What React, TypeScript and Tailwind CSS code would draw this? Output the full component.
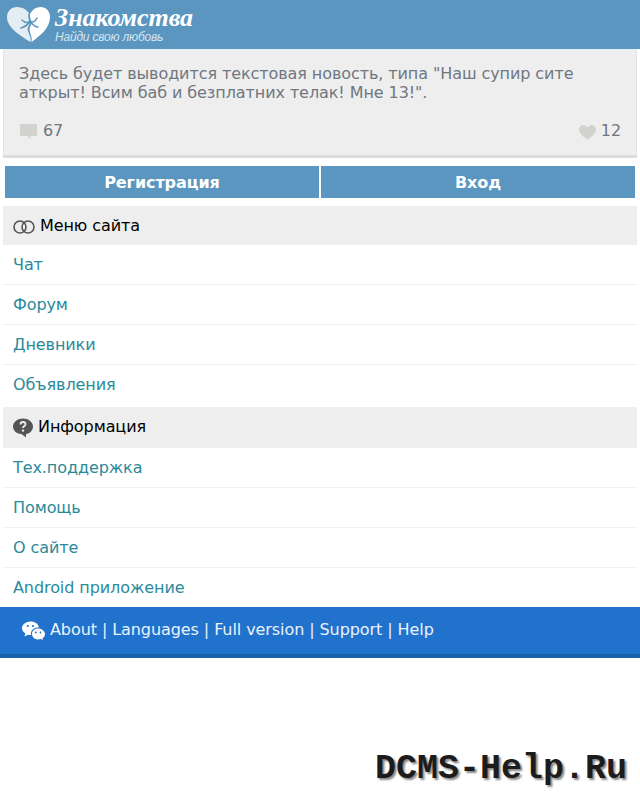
export default function App() {
  const Row = ({ t, last }: { t: string; last?: boolean }) => (
    <a className={`flex items-center px-[10px] text-[#2a8a9a] ${last ? "h-[39px]" : "h-10 border-b border-[#f2f2f2]"}`}>{t}</a>
  );
  return (
    <div className="relative h-[800px] w-[640px] overflow-hidden bg-white font-['DejaVu_Sans',sans-serif] text-base tracking-[-0.08px]">
      <header className="flex h-[49px] items-center bg-[#5b96c0] pl-[7px]">
        <svg width="43" height="35" viewBox="0 0 43 35" className="mt-[-1px]">
          <path d="M23.500 35C14 29 0 21 0 10C0 4 4.500 0 10 0C15 0 19 2 22 6C19 10 25 15 21 20C19 24 25 29 23.500 35Z" fill="#e4edf4" />
          <path d="M24.500 35C26 29 21 24 23 20C27 15 21 10 23.500 6C26 2 29 0 33.500 0C39 0 43 4 43 10C43 21 33 29 24.500 35Z" fill="#ffffff" />
          <path d="M23 14C21 16 18 16 15 13M23 14C25 16 28 15 30 11M22.500 15C20 19 17 20 14 21M23.500 15C26 18 28 20 31 20" fill="none" stroke="#5b96c0" strokeWidth="1.500" strokeLinecap="round" />
          <circle cx="23" cy="15" r="1.800" fill="#5b96c0" />
        </svg>
        <div className="ml-[5px] flex flex-col">
          <span className="font-['Liberation_Serif',serif] text-[26px] leading-[26px] font-bold tracking-[-0.1px] text-white italic">Знакомства</span>
          <span className="font-['Liberation_Sans',sans-serif] text-xs leading-[13px] tracking-[-0.2px] text-[#d5e4ef] italic">Найди свою любовь</span>
        </div>
      </header>

      <section className="mx-[3px] h-[109px] border-x border-t-2 border-b-[3px] border-x-[#e2e2e2] border-t-[#e9f0f3] border-b-[#dddddd] bg-[#eeeeee] px-[15px] pt-[13px] text-[#6f7780]">
        <p className="leading-[19px]">Здесь будет выводится текстовая новость, типа "Наш супир сите аткрыт! Всим баб и безплатних телак! Мне 13!".</p>
        <div className="mt-[17px] flex items-center justify-between">
          <span className="flex items-center gap-[6px]">
            <svg width="17" height="16" viewBox="0 0 17 16" className="mt-[2px] ml-[1px]"><path d="M0 0H17V12H11L9 15.500L8 12H0Z" fill="#d2d2ce" /></svg>
            67
          </span>
          <span className="flex items-center gap-[5px]">
            <svg width="17" height="15" viewBox="0 0 17 15" className="mt-[2px]"><path d="M8.500 15C5 12 0 9 0 4.500C0 2 2 0 4.300 0C6 0 7.600 1 8.500 2.500C9.400 1 11 0 12.700 0C15 0 17 2 17 4.500C17 9 12 12 8.500 15Z" fill="#d2d2ce" /></svg>
            12
          </span>
        </div>
      </section>

      <div className="mx-[5px] mt-2 grid grid-cols-2 gap-[2px]">
        <a className="flex h-8 items-center justify-center bg-[#5b96c0] pt-[1px] font-bold text-white">Регистрация</a>
        <a className="flex h-8 items-center justify-center bg-[#5b96c0] pt-[1px] font-bold text-white">Вход</a>
      </div>

      <div className="mx-[3px] mt-2 flex h-[39px] items-center gap-[5px] bg-[#eeeeee] pl-[10px] text-black">
        <svg width="22" height="14" viewBox="0 0 22 14" className="mt-[3px]" fill="none" stroke="#555" strokeWidth="1.600">
          <circle cx="7" cy="7" r="6" />
          <circle cx="15" cy="7" r="6" />
        </svg>
        Меню сайта
      </div>
      <nav className="mx-[3px]">
        <Row t="Чат" />
        <Row t="Форум" />
        <Row t="Дневники" />
        <Row t="Объявления" last />
      </nav>

      <div className="mx-[3px] mt-[3px] flex h-[41px] items-center gap-[5px] bg-[#eeeeee] pb-[1px] pl-[10px] text-black">
        <svg width="20" height="20" viewBox="0 0 20 20" className="mt-[1px]">
          <path d="M10 0.500C15 0.500 20 4 20 8.500C20 13 16 16 13 16L13 19.500L8.500 16C4 16 0 13 0 8.500C0 4 5 0.500 10 0.500Z" fill="#555" />
          <path d="M7.500 6.500C7.500 5 8.500 4 10 4C11.500 4 12.500 5 12.500 6.300C12.500 8 10 8 10 10" fill="none" stroke="#eee" strokeWidth="1.800" />
          <circle cx="10" cy="12.600" r="1.200" fill="#eee" />
        </svg>
        Информация
      </div>
      <nav className="mx-[3px]">
        <Row t="Тех.поддержка" />
        <Row t="Помощь" />
        <Row t="О сайте" />
        <Row t="Android приложение" last />
      </nav>

      <footer className="flex h-[51px] items-start border-b-4 border-[#1a62a8] bg-[#2172cc] pt-[11px] pl-[22px] text-[#eaf2fb]">
        <svg width="23" height="19" viewBox="0 0 23 19" className="mt-[3px] mr-[5px]" fill="#fff">
          <path d="M8.500 0.500C13 0.500 16.500 3 17 6.500C13 6 9 8.500 9 12.500C9 13 9 13.500 9.200 14C8 14 7 14 6 13.700L2.500 15.500L3.300 12.500C1.300 11 0 9.300 0 7C0 3.500 4 0.500 8.500 0.500Z" />
          <path d="M16 7.500C19.800 7.500 23 10 23 13C23 14.800 22 16.200 20.500 17.300L21 19L18.800 18C18 18.300 17 18.400 16 18.400C12.300 18.400 10 16 10 13C10 10 12.300 7.500 16 7.500Z" />
          <circle cx="5.800" cy="5" r="1.100" fill="#2172cc" />
          <circle cx="11" cy="5" r="1.100" fill="#2172cc" />
          <circle cx="13.800" cy="11.500" r="0.900" fill="#2172cc" />
          <circle cx="18.500" cy="11.500" r="0.900" fill="#2172cc" />
        </svg>
        <span>About | Languages | Full version | Support | Help</span>
      </footer>

      <div className="absolute top-[749px] left-[375px] font-['Liberation_Mono',monospace] text-[35px] leading-[40px] font-bold tracking-normal text-[#1c1c1c] [text-shadow:2px_2px_2px_#888]">DCMS-Help.Ru</div>
    </div>
  );
}
